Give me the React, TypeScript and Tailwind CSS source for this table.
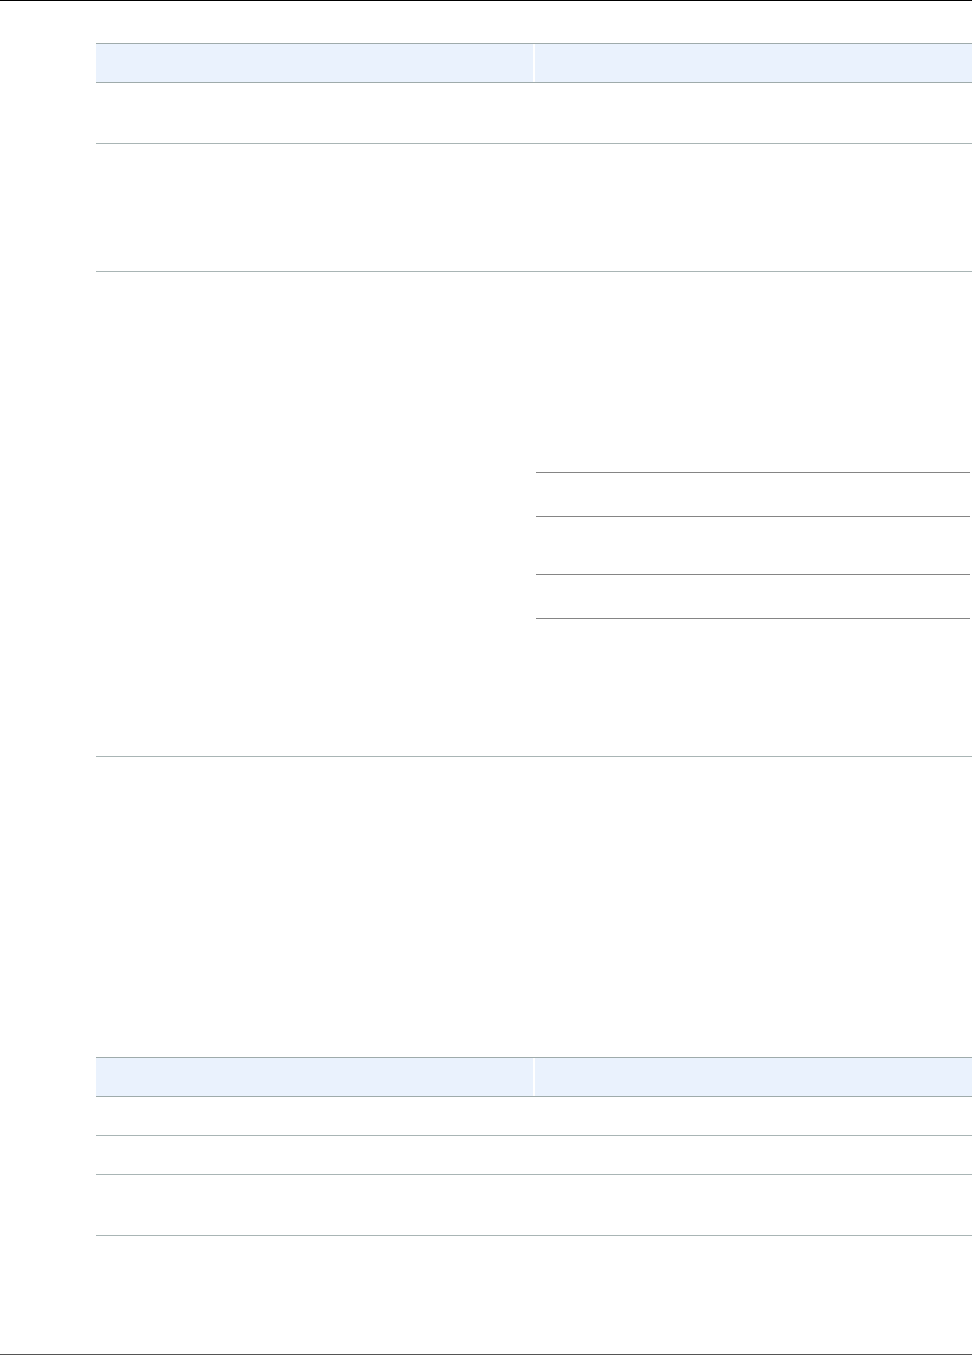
const ruleRow = 'border-b border-[#a9b5b5]';

const HeaderRow = () => (
    <div className="grid grid-cols-[439px_1fr] border-y border-[#9fabab] bg-[#eaf2fd]">
        <div className="h-[38px] border-r-2 border-white" />
        <div className="h-[38px]" />
    </div>
);

const Row = ({ height, right }: { height: string; right?: React.ReactNode }) => (
    <div className={`grid grid-cols-[439px_1fr] ${ruleRow}`}>
        <div className={height} />
        <div className={height}>{right}</div>
    </div>
);

// inner table in the right cell, heights include the rules (border-box)
const NestedTable = () => (
    <div className="flex flex-col pl-[1px] pr-[2px] pt-[200px]">
        <div className="h-[45px] border-y border-[#858585]" />
        <div className="h-[58px] border-b border-[#858585]" />
        <div className="h-[44px] border-b border-[#858585]" />
    </div>
);

const App = () => {
    return (
        <div
            className="flex h-[1355px] w-[972px] flex-col overflow-hidden border-t border-b border-t-black border-b-[#555555] bg-white"
            style={{ fontFamily: '"Liberation Sans", Arial, sans-serif' }}
        >
            {/* first table */}
            <div className="ml-[96px] mt-[42px] flex flex-col">
                <HeaderRow />
                <Row height="h-[60px]" />
                <Row height="h-[127px]" />
                <Row height="h-[484px]" right={<NestedTable />} />
            </div>

            {/* second table */}
            <div className="ml-[96px] mt-[300px] flex flex-col">
                <HeaderRow />
                <Row height="h-[38px]" />
                <Row height="h-[38px]" />
                <Row height="h-[60px]" />
            </div>
        </div>
    );
};

export default App;
